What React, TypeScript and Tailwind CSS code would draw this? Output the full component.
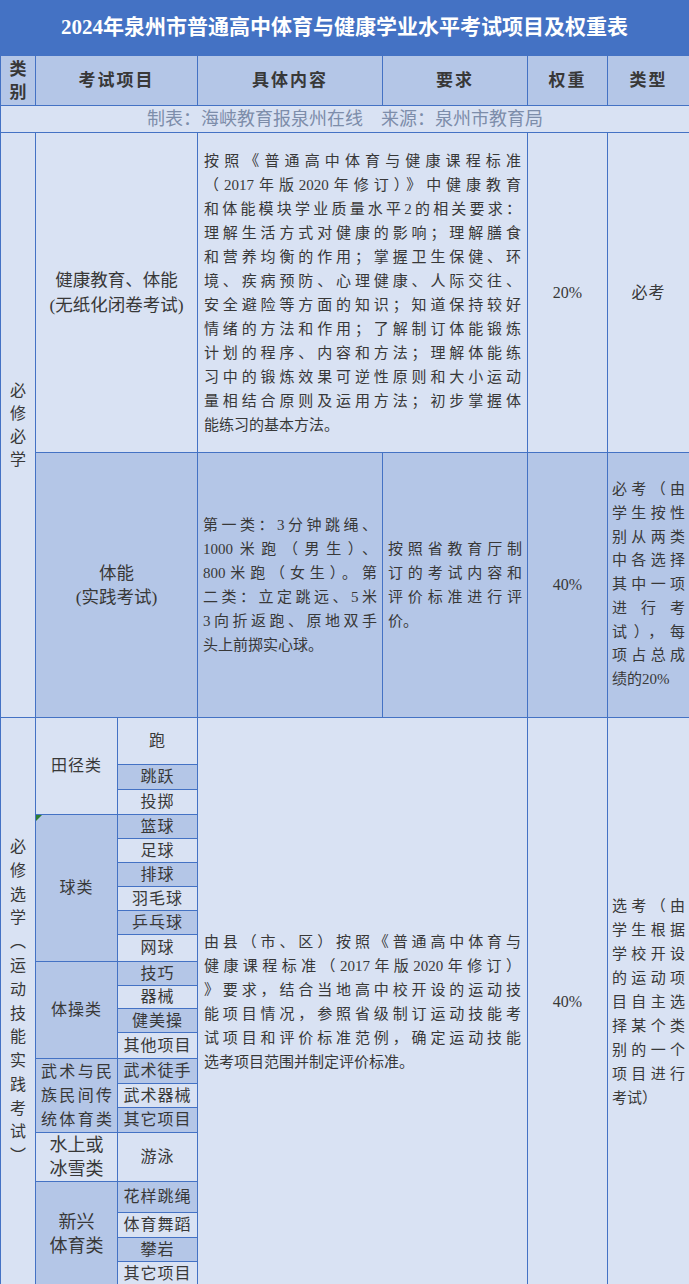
const light = "bg-[#d9e2f3]";
const dark = "bg-[#b4c6e7]";
const cell = "border border-[#4472c4] align-middle";

const rowA = [
  "按照《普通高中体育与健康课程标准",
  "（2017年版2020年修订）》中健康教育",
  "和体能模块学业质量水平2的相关要求：",
  "理解生活方式对健康的影响；理解膳食",
  "和营养均衡的作用；掌握卫生保健、环",
  "境、疾病预防、心理健康、人际交往、",
  "安全避险等方面的知识；知道保持较好",
  "情绪的方法和作用；了解制订体能锻炼",
  "计划的程序、内容和方法；理解体能练",
  "习中的锻炼效果可逆性原则和大小运动",
  "量相结合原则及运用方法；初步掌握体",
  "能练习的基本方法。",
];

const rowBContent = [
  "第一类：3分钟跳绳、",
  "1000米跑（男生）、",
  "800米跑（女生）。第",
  "二类：立定跳远、5米",
  "3向折返跑、原地双手",
  "头上前掷实心球。",
];

const rowBReq = ["按照省教育厅制", "订的考试内容和", "评价标准进行评", "价。"];

const rowBType = [
  "必考（由",
  "学生按性",
  "别从两类",
  "中各选择",
  "其中一项",
  "进行考",
  "试），每",
  "项占总成",
  "绩的20%",
];

const secContent = [
  "由县（市、区）按照《普通高中体育与",
  "健康课程标准（2017年版2020年修订）",
  "》要求，结合当地高中校开设的运动技",
  "能项目情况，参照省级制订运动技能考",
  "试项目和评价标准范例，确定运动技能",
  "选考项目范围并制定评价标准。",
];

const secType = [
  "选考（由",
  "学生根据",
  "学校开设",
  "的运动项",
  "目自主选",
  "择某个类",
  "别的一个",
  "项目进行",
  "考试）",
];

type Item = { name: string; h: string; bg: string };

const items: Item[] = [
  { name: "跑", h: "h-[47px]", bg: light },
  { name: "跳跃", h: "h-[25px]", bg: dark },
  { name: "投掷", h: "h-[25px]", bg: light },
  { name: "篮球", h: "h-[24px]", bg: dark },
  { name: "足球", h: "h-[24px]", bg: light },
  { name: "排球", h: "h-[24px]", bg: dark },
  { name: "羽毛球", h: "h-[24px]", bg: light },
  { name: "乒乓球", h: "h-[24px]", bg: dark },
  { name: "网球", h: "h-[27px]", bg: light },
  { name: "技巧", h: "h-[24px]", bg: dark },
  { name: "器械", h: "h-[23px]", bg: light },
  { name: "健美操", h: "h-[24px]", bg: dark },
  { name: "其他项目", h: "h-[26px]", bg: light },
  { name: "武术徒手", h: "h-[25px]", bg: dark },
  { name: "武术器械", h: "h-[24px]", bg: light },
  { name: "其它项目", h: "h-[25px]", bg: dark },
  { name: "游泳", h: "h-[48px]", bg: light },
  { name: "花样跳绳", h: "h-[31px]", bg: dark },
  { name: "体育舞蹈", h: "h-[25px]", bg: light },
  { name: "攀岩", h: "h-[24px]", bg: dark },
  { name: "其它项目", h: "h-[24px]", bg: light },
];

function Lines({ lines, justifyLast = false }: { lines: string[]; justifyLast?: boolean }) {
  return (
    <>
      {lines.map((l, i) => (
        <div
          key={i}
          className={
            i < lines.length - 1 || justifyLast
              ? "text-justify [text-align-last:justify]"
              : "text-left"
          }
        >
          {l}
        </div>
      ))}
    </>
  );
}

function Category({ index }: { index: number }) {
  if (index === 0)
    return (
      <td rowSpan={3} className={`${cell} ${light} text-center text-[16px] tracking-[1px]`}>
        田径类
      </td>
    );
  if (index === 3)
    return (
      <td rowSpan={6} className={`${cell} ${dark} relative text-center text-[16px] tracking-[1px]`}>
        <span className="absolute left-0 top-0 h-0 w-0 border-r-[6px] border-t-[6px] border-r-transparent border-t-[#2e7d32]" />
        球类
      </td>
    );
  if (index === 9)
    return (
      <td rowSpan={4} className={`${cell} ${dark} text-center text-[16px] tracking-[1px]`}>
        体操类
      </td>
    );
  if (index === 13)
    return (
      <td rowSpan={3} className={`${cell} ${dark} px-[5px] text-[16px] leading-[24px]`}>
        <Lines lines={["武术与民", "族民间传", "统体育类"]} justifyLast />
      </td>
    );
  if (index === 16)
    return (
      <td className={`${cell} ${light} text-center text-[18px] leading-[24px]`}>
        水上或
        <br />
        冰雪类
      </td>
    );
  if (index === 17)
    return (
      <td rowSpan={4} className={`${cell} ${dark} text-center text-[18px] leading-[24px]`}>
        新兴
        <br />
        体育类
      </td>
    );
  return null;
}

export default function App() {
  return (
    <div className="w-[689px] bg-white font-['Liberation_Serif','Noto_Sans_CJK_SC',serif] text-[#383838]">
      <div className="flex h-[55px] items-center justify-center bg-[#4472c4] text-[21px] font-bold text-white">
        2024年泉州市普通高中体育与健康学业水平考试项目及权重表
      </div>
      <table className="w-[689px] table-fixed border-collapse">
        <colgroup>
          <col className="w-[35px]" />
          <col className="w-[82px]" />
          <col className="w-[80px]" />
          <col className="w-[185px]" />
          <col className="w-[145px]" />
          <col className="w-[80px]" />
          <col className="w-[82px]" />
        </colgroup>
        <tbody>
          <tr className="h-[50px] text-[17px] font-bold">
            <td className={`${cell} ${dark} text-center leading-[23px]`}>
              类<br />别
            </td>
            <td colSpan={2} className={`${cell} ${dark} text-center tracking-[2px]`}>
              考试项目
            </td>
            <td className={`${cell} ${dark} text-center tracking-[2px]`}>具体内容</td>
            <td className={`${cell} ${dark} text-center tracking-[2px]`}>要求</td>
            <td className={`${cell} ${dark} text-center tracking-[2px]`}>权重</td>
            <td className={`${cell} ${dark} text-center tracking-[2px]`}>类型</td>
          </tr>
          <tr className="h-[27px]">
            <td colSpan={7} className={`${cell} ${light} text-center text-[18px] leading-[22px] text-[#7d8daa]`}>
              制表：海峡教育报泉州在线　来源：泉州市教育局
            </td>
          </tr>
          <tr className="h-[320px]">
            <td rowSpan={2} className={`${cell} ${light} text-center text-[16px] leading-[23px]`}>
              必<br />修<br />必<br />学
            </td>
            <td colSpan={2} className={`${cell} ${light} text-center text-[17.5px] leading-[25px]`}>
              健康教育、体能
              <br />
              (无纸化闭卷考试)
            </td>
            <td colSpan={2} className={`${cell} ${light} px-[6px] text-[15px] leading-[24px]`}>
              <Lines lines={rowA} />
            </td>
            <td className={`${cell} ${light} text-center text-[16px]`}>20%</td>
            <td className={`${cell} ${light} text-center text-[16px] tracking-[1px]`}>必考</td>
          </tr>
          <tr className="h-[265px]">
            <td colSpan={2} className={`${cell} ${dark} text-center text-[17.5px] leading-[24px]`}>
              体能
              <br />
              (实践考试)
            </td>
            <td className={`${cell} ${dark} px-[5px] text-[15px] leading-[24px]`}>
              <Lines lines={rowBContent} />
            </td>
            <td className={`${cell} ${dark} px-[5px] text-[15px] leading-[24px]`}>
              <Lines lines={rowBReq} />
            </td>
            <td className={`${cell} ${dark} text-center text-[16px]`}>40%</td>
            <td className={`${cell} ${dark} px-[4px] text-[15px] leading-[23.8px]`}>
              <Lines lines={rowBType} />
            </td>
          </tr>
          {items.map((it, i) => (
            <tr key={i} className={it.h}>
              {i === 0 && (
                <td rowSpan={21} className={`${cell} ${light} text-center text-[16px] leading-[23.8px]`}>
                  {"必修选学︵运动技能实践考试︶".split("").map((c, k) => (
                    <div key={k}>{c}</div>
                  ))}
                </td>
              )}
              <Category index={i} />
              <td className={`${cell} ${it.bg} p-0 text-center text-[16px] leading-[20px] tracking-[1px]`}>
                {it.name}
              </td>
              {i === 0 && (
                <>
                  <td rowSpan={21} colSpan={2} className={`${cell} ${light} px-[6px] text-[15px] leading-[24px]`}>
                    <Lines lines={secContent} />
                  </td>
                  <td rowSpan={21} className={`${cell} ${light} text-center text-[16px]`}>
                    40%
                  </td>
                  <td rowSpan={21} className={`${cell} ${light} px-[4px] text-[15px] leading-[24px]`}>
                    <Lines lines={secType} />
                  </td>
                </>
              )}
            </tr>
          ))}
        </tbody>
      </table>
    </div>
  );
}
